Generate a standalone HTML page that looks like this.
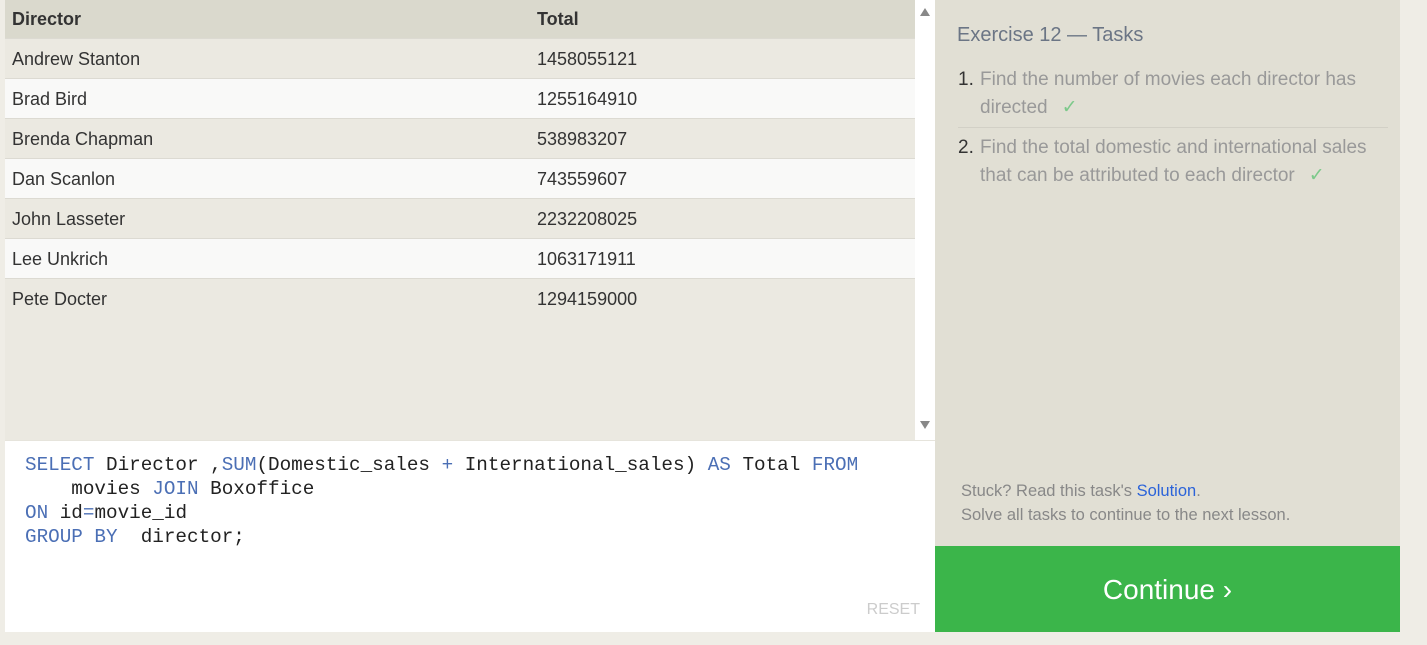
<!DOCTYPE html>
<html><head><meta charset="utf-8"><style>
*{margin:0;padding:0;box-sizing:border-box}
body{width:1427px;height:645px;background:#efede6;font-family:"Liberation Sans",sans-serif;position:relative;overflow:hidden}
#tbl{position:absolute;left:5px;top:0;width:910px;height:440px;background:#ebe9e1}
.row{height:40px;line-height:40px;font-size:18px;color:#333;border-bottom:1px solid #dcdad2;position:relative}
.row span{position:absolute;left:7px}
.row span.t{left:532px}
.h{background:#dad9cd;font-weight:bold;color:#333;height:39px;line-height:38px;font-size:18px}
.odd{background:#ebe9e1}.even{background:#f9f9f8}
#sb{position:absolute;left:915px;top:0;width:20px;height:440px;background:#fff}
#sb .u{position:absolute;left:5px;top:8px;border-left:5px solid transparent;border-right:5px solid transparent;border-bottom:8px solid #888}
#sb .d{position:absolute;left:5px;top:421px;border-left:5px solid transparent;border-right:5px solid transparent;border-top:8px solid #888}
#ed{position:absolute;left:5px;top:440px;width:930px;height:192px;background:#fff;border-top:1px solid #e6e4dc}
pre{font-family:"Liberation Mono",monospace;font-size:19.3px;line-height:24px;color:#222;position:absolute;left:20px;top:12px}
.k{color:#4b6fb5}
.reset{position:absolute;right:15px;bottom:13px;color:#ccc;font-size:16px}
#rp{position:absolute;left:935px;top:0;width:465px;height:546px;background:#e1dfd4}
h2{position:absolute;left:22px;top:24px;font-weight:normal;font-size:20px;color:#6b7585}
ol{position:absolute;left:23px;top:66px;width:430px;list-style:none}
li{font-size:19px;line-height:28px;color:#999;padding-left:22px;position:relative;padding-bottom:5px}
li b{position:absolute;left:0;font-weight:normal;color:#333}
li+li{border-top:1px solid #d2d0c6;padding-top:6px}
li+li b{top:6px}
.ck{color:#7cc98a;margin-left:14px}
.st{position:absolute;left:26px;top:479px;font-size:16.5px;line-height:24px;color:#888}
.st a{color:#2b63d9;text-decoration:none}
#btn{position:absolute;left:935px;top:546px;width:465px;height:86px;background:#3bb54a;color:#fff;font-size:28px;text-align:center;line-height:88px}
</style></head><body>
<div id="tbl">
<div class="row h"><span>Director</span><span class="t">Total</span></div>
<div class="row odd"><span>Andrew Stanton</span><span class="t">1458055121</span></div>
<div class="row even"><span>Brad Bird</span><span class="t">1255164910</span></div>
<div class="row odd"><span>Brenda Chapman</span><span class="t">538983207</span></div>
<div class="row even"><span>Dan Scanlon</span><span class="t">743559607</span></div>
<div class="row odd"><span>John Lasseter</span><span class="t">2232208025</span></div>
<div class="row even"><span>Lee Unkrich</span><span class="t">1063171911</span></div>
<div class="row odd" style="border:none"><span>Pete Docter</span><span class="t">1294159000</span></div>
</div>
<div id="sb"><div class="u"></div><div class="d"></div></div>
<div id="ed"><pre><span class="k">SELECT</span> Director ,<span class="k">SUM</span>(Domestic_sales <span class="k">+</span> International_sales) <span class="k">AS</span> Total <span class="k">FROM</span>
    movies <span class="k">JOIN</span> Boxoffice
<span class="k">ON</span> id<span class="k">=</span>movie_id
<span class="k">GROUP BY</span>  director;</pre><div class="reset">RESET</div></div>
<div id="rp">
<h2>Exercise 12 — Tasks</h2>
<ol>
<li><b>1.</b>Find the number of movies each director has directed<span class="ck">✓</span></li>
<li><b>2.</b>Find the total domestic and international sales that can be attributed to each director<span class="ck">✓</span></li>
</ol>
<div class="st">Stuck? Read this task's <a>Solution</a>.<br>Solve all tasks to continue to the next lesson.</div>
</div>
<div id="btn">Continue ›</div>
</body></html>
